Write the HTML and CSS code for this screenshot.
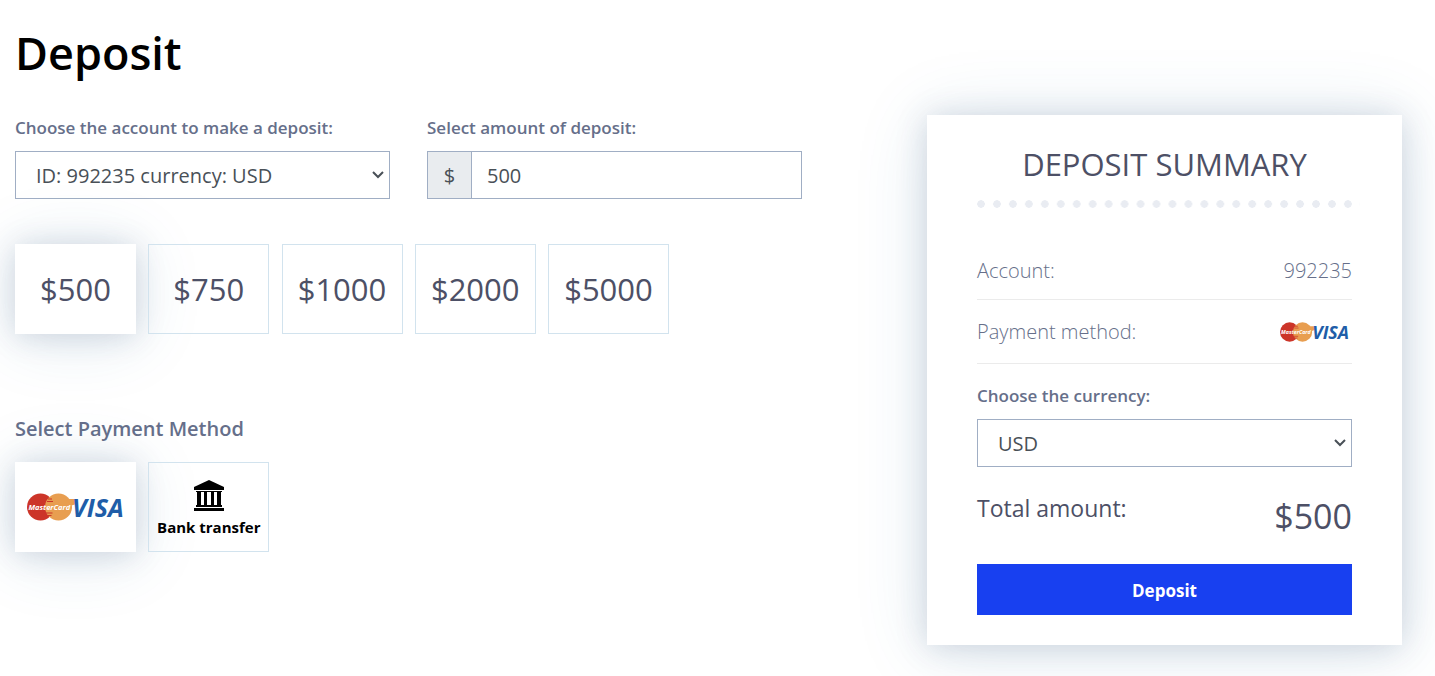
FILE: index.html
```html
<!DOCTYPE html>
<html lang="en">
<head>
<meta charset="utf-8">
<meta name="viewport" content="width=device-width, initial-scale=1">
<title>Deposit</title>
<link rel="stylesheet" href="styles.css">
</head>
<body>
<form class="page">
  <h1 class="title">Deposit</h1>
  <div class="options">
    <div class="fields">
      <div class="field">
        <label class="label" for="account">Choose the account to make a deposit:</label>
        <select class="control select" id="account"><option>ID: 992235 currency: USD</option></select>
      </div>
      <div class="field">
        <label class="label" for="amount">Select amount of deposit:</label>
        <div class="control group">
          <span class="prefix">$</span>
          <input class="amount" id="amount" type="text" value="500">
        </div>
      </div>
    </div>
    <div class="tiles">
      <label class="tile"><input class="radio" type="radio" name="preset" checked>$500</label>
      <label class="tile"><input class="radio" type="radio" name="preset">$750</label>
      <label class="tile"><input class="radio" type="radio" name="preset">$1000</label>
      <label class="tile"><input class="radio" type="radio" name="preset">$2000</label>
      <label class="tile"><input class="radio" type="radio" name="preset">$5000</label>
    </div>
    <h2 class="subtitle">Select Payment Method</h2>
    <div class="tiles">
      <label class="tile"><input class="radio" type="radio" name="method" aria-label="MasterCard or Visa" checked>
        <svg class="cards" viewBox="0 0 196 56" aria-hidden="true">
          <circle cx="27" cy="28" r="27" fill="#cc3529"/>
          <circle cx="63" cy="28" r="27" fill="#e89e50"/>
          <path d="M42 12h8M40 17h12M38 40h13M41 45h8" stroke="#cc3529" stroke-width="2"/>
          <path d="M78 12h18l3 10-10 3z" fill="#e89e50"/>
          <text class="cards-master" x="3" y="34">MasterCard</text>
          <text class="cards-visa" x="90" y="47">VISA</text>
        </svg>
      </label>
      <label class="tile bank"><input class="radio" type="radio" name="method">
        <svg class="bank-icon" viewBox="0 0 32 32" aria-hidden="true">
          <path d="M16 1 31 8v3H1V8z"/>
          <path d="M3 12h26v1H3zM4 13h4v13H4zM11 13h3v13h-3zM18 13h3v13h-3zM24 13h4v13h-4zM3 26h26v2H3zM1 29h30v3H1z"/>
        </svg>
        <span>Bank transfer</span>
      </label>
      <span class="spacer"></span><span class="spacer"></span><span class="spacer"></span>
    </div>
  </div>
  <section class="summary">
    <h2 class="summary-title">DEPOSIT SUMMARY</h2>
    <div class="dots"></div>
    <div class="row"><span>Account:</span><span>992235</span></div>
    <div class="row"><span>Payment method:</span>
      <svg class="cards cards-small" viewBox="0 0 196 56" role="img" aria-label="MasterCard or Visa">
        <circle cx="27" cy="28" r="27" fill="#cc3529"/>
        <circle cx="63" cy="28" r="27" fill="#e89e50"/>
        <path d="M42 12h8M40 17h12M38 40h13M41 45h8" stroke="#cc3529" stroke-width="2"/>
        <path d="M78 12h18l3 10-10 3z" fill="#e89e50"/>
        <text class="cards-master" x="3" y="34">MasterCard</text>
        <text class="cards-visa" x="90" y="47">VISA</text>
      </svg>
    </div>
    <div class="field currency">
      <label class="label" for="currency">Choose the currency:</label>
      <select class="control select" id="currency"><option>USD</option></select>
    </div>
    <div class="total"><span>Total amount:</span><strong class="sum">$500</strong></div>
    <button class="submit" type="button">Deposit</button>
  </section>
</form>
</body>
</html>
```
FILE: styles.css
```css
* { box-sizing: border-box; }
body {
  margin: 0;
  background: #fff;
  color: #4d5066;
  font-family: "Open Sans", "Noto Sans", sans-serif;
}
.page {
  display: grid;
  grid-template-columns: 787fr 475fr;
  column-gap: 125px;
  align-items: start;
  padding: 23px 33px 31px 15px;
}
.title {
  grid-column: 1 / -1;
  margin: 0 0 32px;
  color: #000;
  font-size: 45px;
  font-weight: 600;
  line-height: 60px;
}
.fields { display: grid; grid-template-columns: 1fr 1fr; gap: 37px; }
.field { display: flex; flex-direction: column; gap: 11px; }
.label {
  color: #666f8a;
  font-size: 17px;
  font-weight: 600;
  line-height: 25px;
}
.control {
  width: 100%;
  height: 48px;
  border: 1px solid #a0aec4;
  border-radius: 0;
  background: #fff;
  color: #495057;
  font-family: inherit;
  font-size: 20px;
}
.select {
  padding: 0 32px 0 20px;
  appearance: none;
  background: #fff url("data:image/svg+xml,%3Csvg xmlns='http://www.w3.org/2000/svg' width='12' height='8'%3E%3Cpath d='M1 1l5 5 5-5' fill='none' stroke='%23495057' stroke-width='2'/%3E%3C/svg%3E") no-repeat right 5px center;
}
.group { display: flex; }
.prefix {
  display: flex;
  align-items: center;
  justify-content: center;
  width: 44px;
  border-right: 1px solid #a0aec4;
  background: #e9ecef;
}
.amount {
  flex: 1;
  min-width: 0;
  padding: 0 15px;
  border: 0;
  background: none;
  color: inherit;
  font: inherit;
}
.tiles {
  display: flex;
  justify-content: space-between;
  max-width: 654px;
}
.fields + .tiles { margin-top: 45px; }
.tile, .spacer { width: 121px; }
.tile {
  display: flex;
  flex-direction: column;
  align-items: center;
  justify-content: center;
  height: 90px;
  border: 1px solid #d2e3ee;
  font-size: 31px;
  line-height: 40px;
}
.tile:has(:checked), .summary {
  background: #fff;
  box-shadow: 0 2px 30px rgba(40, 60, 100, 0.18), 0 4px 70px rgba(40, 110, 160, 0.14);
}
.tile:has(:checked) { border-color: #fff; }
.radio { position: absolute; opacity: 0; pointer-events: none; }
.subtitle {
  margin: 80px 0 18px;
  color: #666f8a;
  font-size: 20px;
  font-weight: 600;
  line-height: 30px;
}
.cards { width: 98px; height: 28px; overflow: visible; }
.cards-small { width: 70px; height: 20px; margin-right: 2px; }
.cards-master { fill: #fff; font: italic 700 15px "Open Sans", sans-serif; }
.cards-visa { fill: #205da8; font: italic 700 50px "Open Sans", sans-serif; }
.bank { gap: 4px; padding-top: 4px; color: #000; font-size: 15px; font-weight: 700; line-height: 24px; }
.bank-icon { width: 32px; height: 32px; }
.summary { padding: 28px 50px 30px; }
.summary-title {
  margin: 0;
  font-size: 31px;
  font-weight: 400;
  line-height: 42px;
  text-align: center;
}
.dots {
  height: 8px;
  margin: 15px -8px 34px 0;
  background: radial-gradient(circle at 4px 4px, #e9ecf2 0 3.5px, transparent 4px) 0 0 / 16px 8px round;
}
.row {
  display: flex;
  align-items: center;
  justify-content: space-between;
  height: 58px;
  border-bottom: 1px solid #ebebeb;
  color: #666f8a;
  font-size: 20px;
  font-weight: 300;
}
.row + .row { height: 64px; }
.currency { margin-top: 19px; }
.total {
  display: flex;
  justify-content: space-between;
  margin: 24px 0 23px;
  font-size: 23px;
  line-height: 34px;
}
.sum { font-size: 34px; font-weight: 400; line-height: 50px; }
.submit {
  width: 100%;
  height: 51px;
  padding: 2px 0 0;
  border: 0;
  background: #1840f0;
  color: #fff;
  font-family: inherit;
  font-size: 17px;
  font-weight: 700;
}
```
